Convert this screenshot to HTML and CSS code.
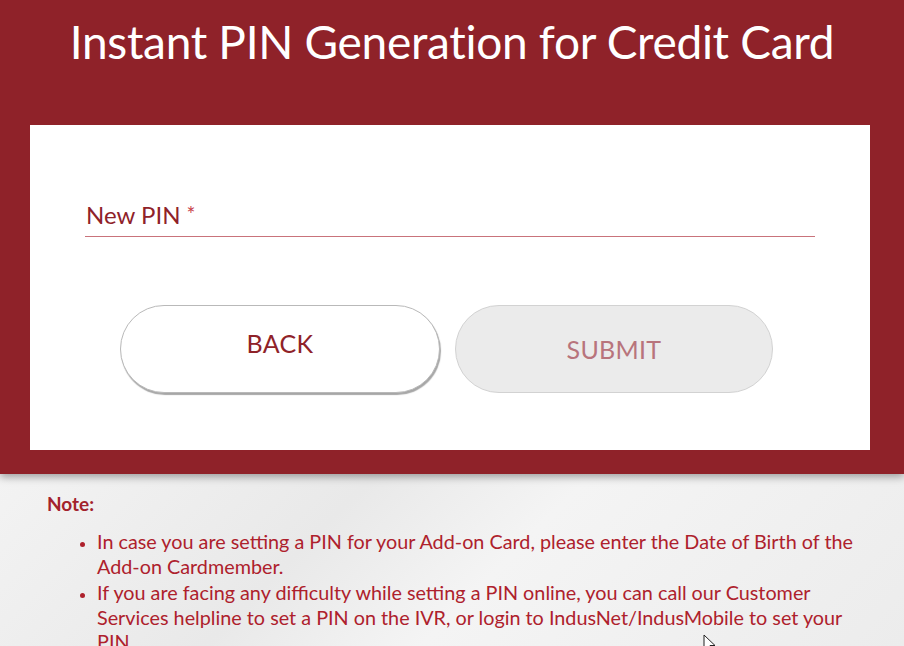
FILE: index.html
```html
<!DOCTYPE html>
<html>
<head>
<meta charset="utf-8">
<link rel="stylesheet" href="styles.css">
</head>
<body>
<div class="page">
  <section class="band">
    <h1 class="title">Instant PIN Generation for Credit Card</h1>
    <div class="card">
      <div class="field">
        <span class="label">New PIN <span class="req">*</span></span>
      </div>
      <div class="actions">
        <button class="btn btn-back">BACK</button>
        <button class="btn btn-submit">SUBMIT</button>
      </div>
    </div>
  </section>
  <section class="notes">
    <div class="note-title">Note:</div>
    <ul class="note-list">
      <li>In case you are setting a PIN for your Add-on Card, please enter the Date of Birth of the Add-on Cardmember.</li>
      <li>If you are facing any difficulty while setting a PIN online, you can call our Customer Services helpline to set a PIN on the IVR, or login to IndusNet/IndusMobile to set your PIN.</li>
    </ul>
    <svg class="cursor" width="14" height="20" viewBox="0 0 14 20"><path d="M1 1 L1 16 L4.5 12.5 L7 18.5 L9.5 17.5 L7 11.5 L12 11.5 Z" fill="#fff" stroke="#222" stroke-width="1"/></svg>
  </section>
</div>
</body>
</html>
```
FILE: styles.css
```css
* { box-sizing: border-box; }
html, body { margin: 0; padding: 0; }
body {
  font-family: Lato, "Open Sans", sans-serif;
  background: #efefef;
  overflow: hidden;
}
.page { width: 904px; height: 646px; position: relative; overflow: hidden; }
.band {
  background: #8f2229;
  padding: 13px 34px 24px 30px;
  position: relative;
  z-index: 1;
  box-shadow: 0 3px 8px rgba(0,0,0,0.35);
}
.title {
  margin: 0;
  color: #fff;
  font-weight: 400;
  font-size: 46px;
  line-height: 58px;
  text-align: center;
  letter-spacing: -0.3px;
  height: 112px;
  padding-left: 4px;
}
.card {
  background: #fff;
  height: 325px;
  padding: 76px 55px 0 55px;
}
.field {
  border-bottom: 1px solid #c9737b;
  padding: 0 0 8px 1px;
}
.label {
  color: #8f2229;
  font-size: 24px;
  line-height: 26px;
}
.req { color: #c8424b; font-size: 21px; vertical-align: 2px; }
.actions {
  display: flex;
  gap: 15px;
  padding: 68px 0 0 35px;
}
.btn {
  font-family: Lato, sans-serif;
  width: 320px;
  height: 88px;
  border-radius: 44px;
  font-size: 25px;
  letter-spacing: 0.3px;
}
.btn-back {
  background: #fff;
  color: #8f2229;
  border: 1px solid #b9b9b9;
  box-shadow: 1px 2px 1px rgba(0,0,0,0.35);
  padding-bottom: 14px;
}
.btn-submit {
  width: 318px;
  background: #ebebeb;
  color: #b8747c;
  border: 1px solid #d2d2d2;
  padding-bottom: 2px;
}
.notes {
  padding: 18px 50px 0 47px;
  position: relative;
  height: 172px;
  background: linear-gradient(135deg, #f3f3f3 0%, #e9e9e9 35%, #f4f4f4 55%, #ececec 100%);
}
.note-title {
  color: #a3222c;
  font-weight: 700;
  font-size: 19px;
  line-height: 24px;
}
.note-list {
  margin: 13px 0 0 0;
  padding-left: 50px;
  color: #ae212c;
  font-size: 19.8px;
  line-height: 24.5px;
}
.note-list li { margin-bottom: 2px; }
.note-list li::marker { font-size: 16px; }
.cursor { position: absolute; left: 703px; top: 160px; }
```
